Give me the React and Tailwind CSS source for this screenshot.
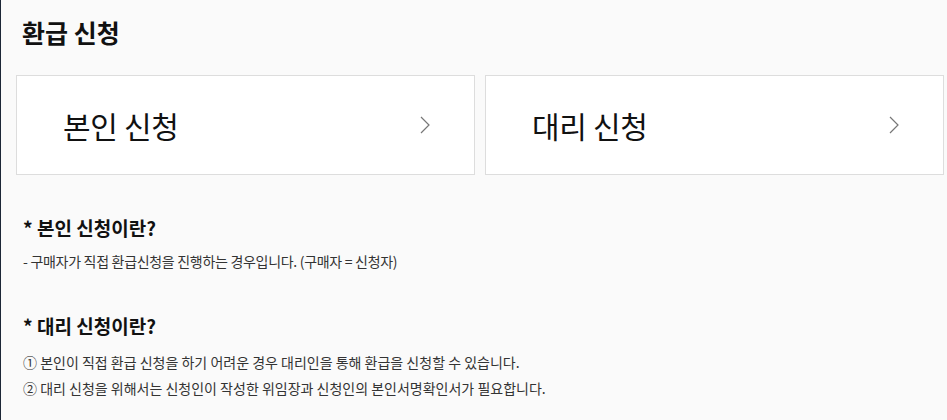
export default function App() {
  const cards = ['본인 신청', '대리 신청'];

  return (
    <div
      className="w-[947px] h-[420px] bg-[#fafafa] border-l border-[#1c2636] overflow-hidden"
      style={{ fontFamily: '"Noto Sans CJK KR", "Noto Sans", sans-serif' }}
    >
      <div className="pl-[15px] pr-[3px] pt-[13px]">
        <h1 className="pl-[6px] text-[25px] leading-[38px] font-bold text-[#111]">환급 신청</h1>

        {/* Option cards */}
        <div className="mt-[24px] grid grid-cols-2 gap-[10px]">
          {cards.map((label) => (
            <button
              key={label}
              type="button"
              className="h-[100px] bg-white border border-[#dddddd] flex items-center justify-between pl-[46px] pr-[44px] cursor-pointer"
            >
              <span className="text-[30px] font-normal text-[#111] tracking-[-0.3px]">{label}</span>
              <svg width="10" height="18" viewBox="0 0 10 18" fill="none" stroke="#777" strokeWidth="1.2">
                <path d="M1 1l8 8-8 8" />
              </svg>
            </button>
          ))}
        </div>

        {/* Descriptions */}
        <div className="pl-[7px] mt-[39px]">
          <h2 className="text-[19px] leading-[27px] font-bold text-[#111]">* 본인 신청이란?</h2>
          <p className="mt-[10px] text-[14px] leading-[20px] text-[#333] tracking-[-0.3px]">
            - 구매자가 직접 환급신청을 진행하는 경우입니다. (구매자 = 신청자)
          </p>

          <h2 className="mt-[41px] text-[19px] leading-[27px] font-bold text-[#111]">* 대리 신청이란?</h2>
          <p className="mt-[10px] text-[14px] leading-[26px] text-[#333]">
            ① 본인이 직접 환급 신청을 하기 어려운 경우 대리인을 통해 환급을 신청할 수 있습니다.
          </p>
          <p className="text-[14px] leading-[26px] text-[#333]">
            ② 대리 신청을 위해서는 신청인이 작성한 위임장과 신청인의 본인서명확인서가 필요합니다.
          </p>
        </div>
      </div>
    </div>
  );
}
